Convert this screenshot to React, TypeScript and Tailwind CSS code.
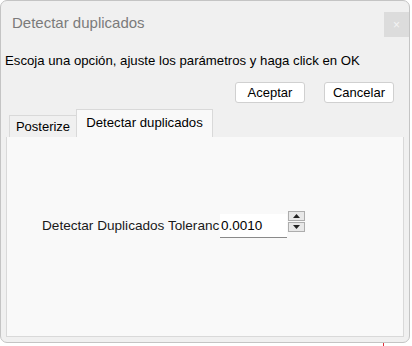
import { useState } from "react";

const font = { fontFamily: '"Liberation Sans", Arial, sans-serif' };

function Spinner() {
  return (
    <div className="flex flex-col gap-[1px] ml-[1px] mt-[-3px] self-start">
      <button className="w-[17px] h-[10px] border border-[#adadad] bg-[#e8e8e8] flex items-center justify-center">
        <svg width="7" height="4" viewBox="0 0 7 4">
          <path d="M0 4 L3.5 0 L7 4 Z" fill="#222" />
        </svg>
      </button>
      <button className="w-[17px] h-[10px] border border-[#adadad] bg-[#e8e8e8] flex items-center justify-center">
        <svg width="7" height="4" viewBox="0 0 7 4">
          <path d="M0 0 L3.5 4 L7 0 Z" fill="#222" />
        </svg>
      </button>
    </div>
  );
}

export default function App() {
  const [tab, setTab] = useState(1);
  const [value, setValue] = useState("0.0010");

  return (
    <div className="w-[412px] h-[346px] bg-white relative" style={font}>
      <div className="w-[410px] h-[343px] rounded-[7px] border border-[#c4c4c4] bg-[#f0f0f0] flex flex-col">
        {/* title bar */}
        <div className="flex items-start justify-between h-[38px]">
          <span className="pl-[11px] pt-[13px] text-[15px] leading-[18px] text-[#7b7b7b]">
            Detectar duplicados
          </span>
          <div className="mt-[11px] w-[25px] h-[25px] bg-[#dcdcdc] flex items-center justify-center text-[#f4f4f4] text-[12px]">
            ×
          </div>
        </div>

        <p className="pl-[4px] pt-[14px] text-[13.2px] leading-[16px] text-black">
          Escoja una opción, ajuste los parámetros y haga click en OK
        </p>

        <div className="flex justify-end gap-[19px] pr-[15px] pt-[13px]">
          <button className="w-[70px] h-[21px] rounded-[3px] border border-[#d0d0d0] bg-white text-[13px] leading-[19px] text-black">
            Aceptar
          </button>
          <button className="w-[70px] h-[21px] rounded-[3px] border border-[#d0d0d0] bg-white text-[13px] leading-[19px] text-black">
            Cancelar
          </button>
        </div>

        {/* tabs */}
        <div className="flex items-end pl-[8px] mt-[6px] h-[28px]">
          <button
            onClick={() => setTab(0)}
            className={
              tab === 0
                ? "h-[28px] w-[67px] bg-[#f9f9f9] border border-b-0 border-[#d9d9d9] text-[13px] text-black"
                : "h-[22px] w-[67px] bg-[#f0f0f0] border border-b-0 border-r-0 border-[#d9d9d9] text-[13px] leading-[15px] text-black"
            }
          >
            Posterize
          </button>
          <button
            onClick={() => setTab(1)}
            className={
              tab === 1
                ? "h-[28px] w-[137px] bg-[#f9f9f9] border border-b-0 border-[#d9d9d9] text-[13.2px] leading-[22px] text-black pb-[2px]"
                : "h-[22px] w-[137px] bg-[#f0f0f0] border border-b-0 border-[#d9d9d9] text-[13px] text-black"
            }
          >
            Detectar duplicados
          </button>
        </div>

        <div className="mx-[5px] mb-[5px] flex-1 bg-[#f9f9f9] border border-t-0 border-[#d9d9d9] flex flex-col">
          {tab === 1 && (
            <div className="flex items-center pl-[35px] pt-[77px]">
              <span className="w-[178px] whitespace-nowrap text-[13.6px] text-[#1a1a1a]">
                Detectar Duplicados Toleranc
              </span>
              <input
                value={value}
                onChange={(e) => setValue(e.target.value)}
                className="w-[67px] h-[24px] bg-white border-b border-[#8a8a8a] px-[1px] text-[13.5px] text-black outline-none"
                style={font}
              />
              <Spinner />
            </div>
          )}
        </div>
      </div>
      <div className="absolute left-[383px] top-[343px] w-[1px] h-[3px] bg-[#e0303a]" />
    </div>
  );
}
